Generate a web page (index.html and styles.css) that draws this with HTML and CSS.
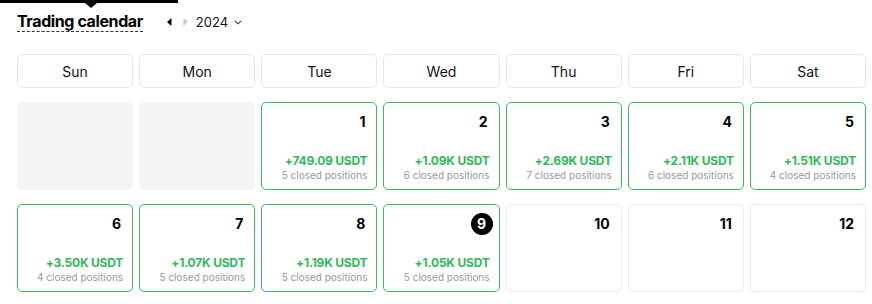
FILE: index.html
```html
<!DOCTYPE html>
<html lang="en">
<head>
<meta charset="utf-8">
<title>Trading calendar</title>
<link rel="stylesheet" href="styles.css">
</head>
<body>
<div class="tip"><span class="tip-arrow"></span></div>
<div class="page">
  <div class="toolbar">
    <span class="title">Trading calendar</span>
    <span class="nav">
      <svg class="arr" width="5" height="8" viewBox="0 0 5 8"><path d="M4.5 0 L0 4 L4.5 8 Z" fill="#000"/></svg>
      <svg class="arr" width="5" height="8" viewBox="0 0 5 8"><path d="M0.5 0 L5 4 L0.5 8 Z" fill="#c8c8c8"/></svg>
    </span>
    <span class="year">2024</span>
    <svg class="chev" width="8" height="5" viewBox="0 0 8 5"><path d="M0.8 0.8 L4 3.8 L7.2 0.8" fill="none" stroke="#333" stroke-width="1.1"/></svg>
  </div>
  <div class="grid">
    <div class="wd">Sun</div>
    <div class="wd">Mon</div>
    <div class="wd">Tue</div>
    <div class="wd">Wed</div>
    <div class="wd">Thu</div>
    <div class="wd">Fri</div>
    <div class="wd">Sat</div>

    <div class="day blank"></div>
    <div class="day blank"></div>
    <div class="day win"><span class="num">1</span><div class="res"><div class="pnl">+749.09 USDT</div><div class="cnt">5 closed positions</div></div></div>
    <div class="day win"><span class="num">2</span><div class="res"><div class="pnl">+1.09K USDT</div><div class="cnt">6 closed positions</div></div></div>
    <div class="day win"><span class="num">3</span><div class="res"><div class="pnl">+2.69K USDT</div><div class="cnt">7 closed positions</div></div></div>
    <div class="day win"><span class="num">4</span><div class="res"><div class="pnl">+2.11K USDT</div><div class="cnt">6 closed positions</div></div></div>
    <div class="day win"><span class="num">5</span><div class="res"><div class="pnl">+1.51K USDT</div><div class="cnt">4 closed positions</div></div></div>

    <div class="day win"><span class="num">6</span><div class="res"><div class="pnl">+3.50K USDT</div><div class="cnt">4 closed positions</div></div></div>
    <div class="day win"><span class="num">7</span><div class="res"><div class="pnl">+1.07K USDT</div><div class="cnt">5 closed positions</div></div></div>
    <div class="day win"><span class="num">8</span><div class="res"><div class="pnl">+1.19K USDT</div><div class="cnt">5 closed positions</div></div></div>
    <div class="day win"><span class="num today">9</span><div class="res"><div class="pnl">+1.05K USDT</div><div class="cnt">5 closed positions</div></div></div>
    <div class="day"><span class="num">10</span></div>
    <div class="day"><span class="num">11</span></div>
    <div class="day"><span class="num">12</span></div>
  </div>
</div>
</body>
</html>
```

FILE: styles.css
```css
* { box-sizing: border-box; }
html, body { margin: 0; padding: 0; background: #fff; }
body {
  font-family: Inter, "Noto Sans", "Liberation Sans", sans-serif;
  color: #111;
  width: 872px;
  height: 304px;
  overflow: hidden;
  position: relative;
}
.tip {
  position: absolute;
  left: 0;
  top: 0;
  width: 178px;
  height: 3px;
  background: #000;
}
.tip-arrow {
  position: absolute;
  left: 85px;
  top: 3px;
  width: 0;
  height: 0;
  border-left: 6px solid transparent;
  border-right: 6px solid transparent;
  border-top: 5px solid #000;
}
.page {
  padding: 12px 6px 0 17px;
}
.toolbar {
  display: flex;
  align-items: center;
  height: 20px;
}
.title {
  font-size: 16px;
  font-weight: 700;
  line-height: 19px;
  color: #000;
  border-bottom: 1px dashed #333;
  letter-spacing: -0.4px;
}
.nav {
  display: flex;
  align-items: center;
  gap: 11px;
  margin-left: 24px;
}
.arr { display: block; }
.year {
  font-size: 13px;
  margin-left: 8px;
  color: #111;
}
.chev {
  display: block;
  margin-left: 6px;
  margin-top: 1px;
}
.grid {
  margin-top: 22px;
  display: grid;
  grid-template-columns: repeat(7, 1fr);
  grid-template-rows: 34px 88px 88px;
  column-gap: 6px;
  row-gap: 14px;
}
.wd {
  border: 1px solid #e8e8e8;
  border-radius: 5px;
  display: flex;
  align-items: center;
  justify-content: center;
  font-size: 14px;
  color: #111;
}
.day {
  border: 1px solid #ebebeb;
  border-radius: 5px;
  padding: 8px 9px 6px 9px;
  display: flex;
  flex-direction: column;
  align-items: flex-end;
  justify-content: space-between;
}
.day.blank {
  background: #f4f4f4;
  border-color: #f4f4f4;
}
.day.win {
  border-color: #35bd63;
}
.num {
  font-size: 14px;
  font-weight: 700;
  line-height: 22px;
  color: #000;
  margin-right: 2px;
}
.num.today {
  width: 22px;
  height: 22px;
  border-radius: 50%;
  background: #000;
  color: #fff;
  text-align: center;
  margin-right: -3px;
}
.res {
  text-align: right;
}
.pnl {
  font-size: 12px;
  font-weight: 700;
  color: #31b85d;
  line-height: 15px;
  letter-spacing: -0.2px;
}
.cnt {
  font-size: 10px;
  color: #999;
  line-height: 15px;
  margin-top: 0;
}
```
